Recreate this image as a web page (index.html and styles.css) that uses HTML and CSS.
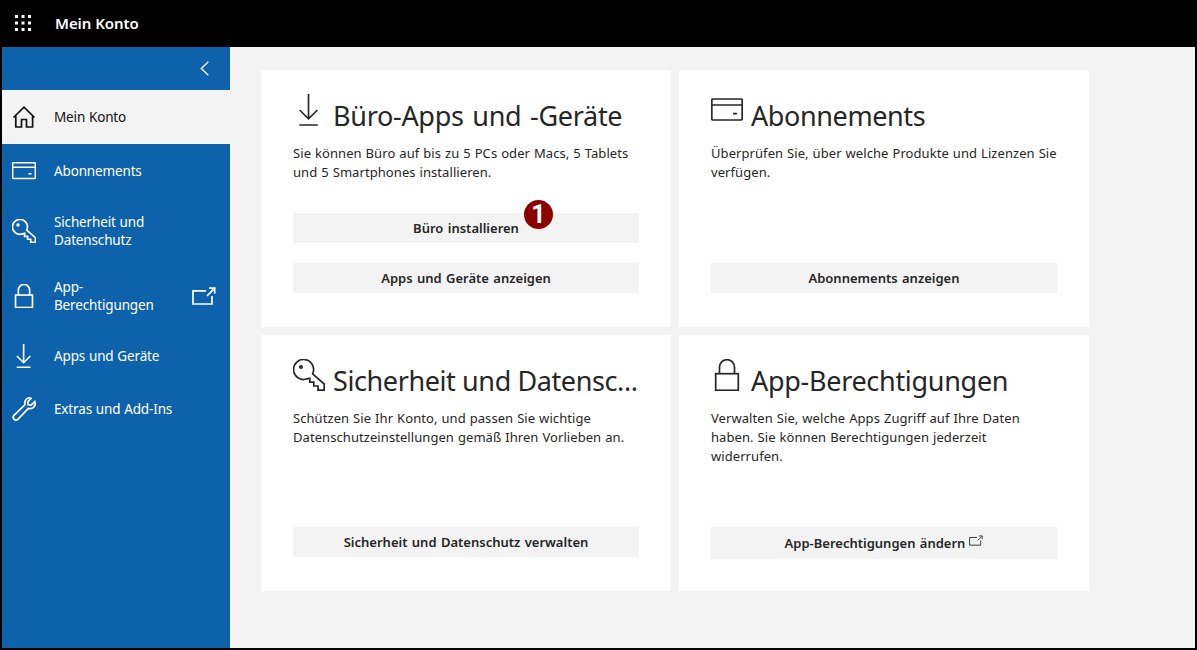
FILE: index.html
```html
<!DOCTYPE html>
<html lang="de">
<head>
    <meta charset="UTF-8">
    <meta name="viewport" content="width=device-width, initial-scale=1.0">
    <title>Mein Konto</title>
    <link rel="stylesheet" href="styles.css">
</head>
<body>
    <!-- Icons -->
    <svg class="icon-defs" width="0" height="0">
        <symbol id="icon-card" viewBox="0 0 32 32">
            <rect x="0.8" y="5" width="30.4" height="21" rx="1.2"/>
            <path d="M1 11H31M22 19.6H26"/>
        </symbol>
        <symbol id="icon-key" viewBox="0 0 32 32">
            <path d="M19.6 14.8L31.2 25V31.2H25V27H20.8V23.2H16.8V19.2L14.2 19.8A10 10 0 1 1 19.6 14.8Z"/>
            <circle cx="8" cy="8" r="1.2"/>
        </symbol>
        <symbol id="icon-lock" viewBox="0 0 32 32">
            <rect x="4.7" y="14.7" width="22.6" height="16.6"/>
            <path d="M8.5 14.5V8.2A7.5 7.5 0 0 1 23.5 8.2V14.5"/>
        </symbol>
        <symbol id="icon-download" viewBox="0 0 32 33">
            <path d="M15.5 0V25.5M6.3 16.5L15.5 25.7L24.7 16.5M6 32H25"/>
        </symbol>
        <symbol id="icon-external" viewBox="0 0 24 18">
            <path d="M14 3.8H1V17H20V9M15 9L21.5 2.4M17 1.2H22.7V6.5"/>
        </symbol>
    </svg>

    <div class="page">
        <header class="topbar">
            <svg class="launcher" viewBox="0 0 16 16">
                <path d="M0 0h3v3H0zM6.5 0h3v3h-3zM13 0h3v3h-3zM0 6.5h3v3H0zM6.5 6.5h3v3h-3zM13 6.5h3v3h-3zM0 13h3v3H0zM6.5 13h3v3h-3zM13 13h3v3h-3z"/>
            </svg>
            <span class="brand">Mein Konto</span>
        </header>

        <div class="layout">
            <nav class="sidebar">
                <div class="collapse">
                    <svg class="chevron" viewBox="0 0 9 15"><path d="M8.3 0.7L1.3 7.5L8.3 14.3"/></svg>
                </div>
                <a class="nav-item active">
                    <svg class="nav-icon" viewBox="0 0 24 24">
                        <path d="M1.5 12.5L12 2.2L22.5 12.5M3.8 10.5V22H9.5V14.5H14.5V22H20.6V10.5"/>
                    </svg>
                    <span class="nav-label">Mein Konto</span>
                </a>
                <a class="nav-item">
                    <svg class="nav-icon"><use href="#icon-card"/></svg>
                    <span class="nav-label">Abonnements</span>
                </a>
                <a class="nav-item tall">
                    <svg class="nav-icon"><use href="#icon-key"/></svg>
                    <span class="nav-label">Sicherheit und<br>Datenschutz</span>
                </a>
                <a class="nav-item tall">
                    <svg class="nav-icon"><use href="#icon-lock"/></svg>
                    <span class="nav-label">App-<br>Berechtigungen</span>
                    <svg class="nav-external"><use href="#icon-external"/></svg>
                </a>
                <a class="nav-item">
                    <svg class="nav-icon"><use href="#icon-download"/></svg>
                    <span class="nav-label">Apps und Geräte</span>
                </a>
                <a class="nav-item">
                    <svg class="nav-icon" viewBox="0 0 24 24">
                        <path d="M22.8 4.6L19 8.2L16.2 7.8L15.6 5.2L19 1.3C15.4 0 12 3 12.9 7.8L1.7 18.6A2.8 2.8 0 0 0 5.6 22.5L16.4 11.5C21 12.4 24.4 8.8 22.8 4.6Z"/>
                    </svg>
                    <span class="nav-label">Extras und Add-Ins</span>
                </a>
            </nav>

            <main class="cards">
                <section class="card">
                    <div class="card-head">
                        <svg class="card-icon"><use href="#icon-download"/></svg>
                        <h2 class="spaced">Büro-Apps und -Geräte</h2>
                    </div>
                    <p>Sie können Büro auf bis zu 5 PCs oder Macs, 5 Tablets<br>und 5 Smartphones installieren.</p>
                    <div class="actions">
                        <button class="btn">Büro installieren<span class="badge">1</span></button>
                        <button class="btn">Apps und Geräte anzeigen</button>
                    </div>
                </section>

                <section class="card">
                    <div class="card-head">
                        <svg class="card-icon"><use href="#icon-card"/></svg>
                        <h2>Abonnements</h2>
                    </div>
                    <p>Überprüfen Sie, über welche Produkte und Lizenzen Sie<br>verfügen.</p>
                    <div class="actions">
                        <button class="btn">Abonnements anzeigen</button>
                    </div>
                </section>

                <section class="card">
                    <div class="card-head">
                        <svg class="card-icon"><use href="#icon-key"/></svg>
                        <h2>Sicherheit und Datensc...</h2>
                    </div>
                    <p>Schützen Sie Ihr Konto, und passen Sie wichtige<br>Datenschutzeinstellungen gemäß Ihren Vorlieben an.</p>
                    <div class="actions">
                        <button class="btn">Sicherheit und Datenschutz verwalten</button>
                    </div>
                </section>

                <section class="card">
                    <div class="card-head">
                        <svg class="card-icon"><use href="#icon-lock"/></svg>
                        <h2 class="spaced">App-Berechtigungen</h2>
                    </div>
                    <p>Verwalten Sie, welche Apps Zugriff auf Ihre Daten<br>haben. Sie können Berechtigungen jederzeit<br>widerrufen.</p>
                    <div class="actions">
                        <button class="btn btn-link">App-Berechtigungen ändern<svg class="btn-external"><use href="#icon-external"/></svg></button>
                    </div>
                </section>
            </main>
        </div>
    </div>
</body>
</html>
```
FILE: styles.css
```css
* {
    box-sizing: border-box;
}
body {
    margin: 0;
    font-family: "Noto Sans", "Open Sans", sans-serif;
    background-color: #f3f3f3;
    color: #262626;
}
svg {
    fill: none;
    stroke: currentColor;
    flex-shrink: 0;
}
.icon-defs {
    display: block;
}
.page {
    display: flex;
    flex-direction: column;
    height: 650px;
    border: 2px solid #000;
    border-top: none;
}
.topbar {
    display: flex;
    align-items: center;
    height: 47px;
    padding: 0 0 1px 13px;
    background-color: #000;
    color: #fff;
}
.launcher {
    width: 16px;
    height: 16px;
    fill: #fff;
    stroke: none;
}
.brand {
    margin-left: 24px;
    font-size: 15px;
    font-weight: 600;
    line-height: 20px;
    letter-spacing: -0.05px;
}
.layout {
    display: flex;
    flex: 1;
}

/* Sidebar */
.sidebar {
    width: 228px;
    background-color: #0e62ab;
    color: #fff;
}
.collapse {
    display: flex;
    align-items: center;
    justify-content: flex-end;
    height: 43px;
    padding-right: 21px;
}
.chevron {
    width: 9px;
    height: 15px;
    stroke-width: 1.3;
}
.nav-item {
    display: flex;
    align-items: center;
    height: 53.5px;
    padding: 0 14px 0 10px;
    font-size: 13.5px;
    line-height: 18px;
}
.nav-item.tall {
    height: 65.5px;
}
.nav-item.active {
    height: 54px;
    margin-bottom: 0.5px;
    background-color: #f3f3f3;
    color: #111;
}
.nav-icon {
    width: 24px;
    height: 24px;
    stroke-width: 1.7;
    overflow: visible;
}
.nav-icon use {
    stroke-width: 2.2;
}
.nav-label {
    margin-left: 18px;
    white-space: nowrap;
    letter-spacing: -0.15px;
    word-spacing: 0.5px;
}
.nav-external {
    width: 24px;
    height: 18px;
    margin-left: auto;
    stroke-width: 1.7;
}

/* Cards */
.cards {
    display: grid;
    grid-template-columns: 410px 410px;
    grid-template-rows: 257px 256px;
    gap: 8px;
    padding: 23px 0 0 31px;
}
.card {
    display: flex;
    flex-direction: column;
    padding: 24px 32px 34px;
    background-color: #fff;
}
.card-head {
    display: flex;
    height: 50px;
}
.card-icon {
    width: 32px;
    height: 32px;
    stroke-width: 1.7;
    overflow: visible;
}
h2 {
    margin: 3px 0 0 8px;
    font-size: 27px;
    font-weight: 400;
    line-height: 38px;
    white-space: nowrap;
    letter-spacing: -0.4px;
}
h2.spaced {
    letter-spacing: -0.3px;
    word-spacing: 2px;
}
p {
    margin: 0;
    font-size: 13px;
    line-height: 19px;
    white-space: nowrap;
    letter-spacing: 0.07px;
    word-spacing: 0.5px;
}
.actions {
    display: flex;
    flex-direction: column;
    gap: 20px;
    margin-top: auto;
}
.btn {
    position: relative;
    height: 30px;
    padding: 0;
    border: none;
    background-color: #f3f3f3;
    color: #262626;
    font-family: inherit;
    font-size: 13px;
    font-weight: 600;
    line-height: 30px;
    word-spacing: 1px;
}
.btn-link {
    height: 32px;
    margin-bottom: -2px;
}
.btn-external {
    width: 14px;
    height: 11px;
    margin-left: 4px;
    vertical-align: 2px;
    stroke-width: 1.5;
}
.badge {
    position: absolute;
    top: -13px;
    left: 231px;
    width: 29px;
    height: 29px;
    border-radius: 50%;
    background-color: #8b0000;
    color: #fff;
    font-family: Roboto, sans-serif;
    font-size: 25px;
    font-weight: 700;
    line-height: 29px;
    text-align: center;
}
```
